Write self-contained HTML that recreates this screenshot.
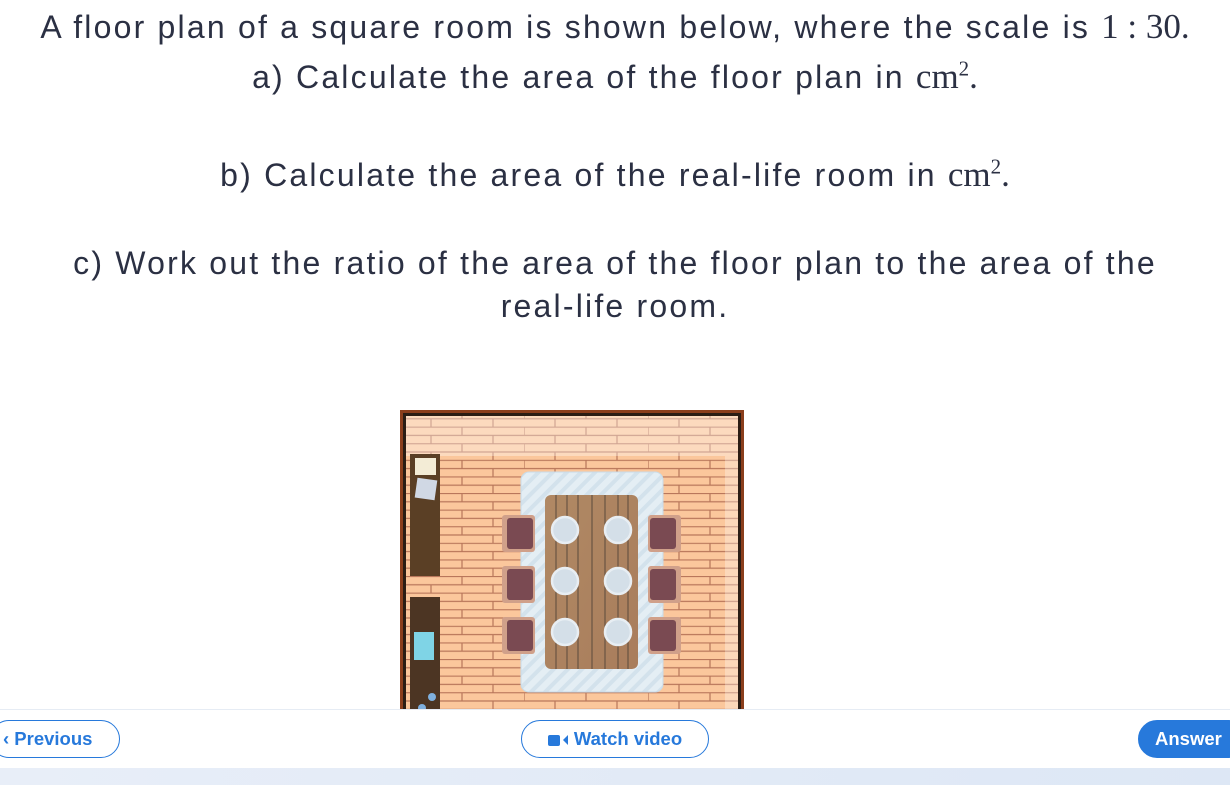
<!DOCTYPE html>
<html><head><meta charset="utf-8"><style>
html,body{margin:0;padding:0;width:1230px;height:785px;overflow:hidden;background:#fff;font-family:"Liberation Sans",sans-serif;color:#2b3043}
.t{position:absolute;left:0;width:1230px;text-align:center;font-size:32px;letter-spacing:2.2px;white-space:nowrap}
.m{font-family:"Liberation Serif",serif;font-size:35px;letter-spacing:0}
sup{font-size:21px;line-height:0}
.btn{position:absolute;top:720px;height:38px;border:1.5px solid #2779db;border-radius:20px;box-sizing:border-box;color:#2779db;font-weight:bold;font-size:18.5px;line-height:36px}
</style></head><body>
<div class="t" style="top:7px">A floor plan of a square room is shown below, where the scale is <span class="m">1 : 30.</span></div>
<div class="t" style="top:57px">a) Calculate the area of the floor plan in <span class="m">cm<sup>2</sup>.</span></div>
<div class="t" style="top:155px">b) Calculate the area of the real-life room in <span class="m">cm<sup>2</sup>.</span></div>
<div class="t" style="top:245px">c) Work out the ratio of the area of the floor plan to the area of the</div>
<div class="t" style="top:288px">real-life room.</div>

<svg style="position:absolute;left:400px;top:410px" width="344" height="300" viewBox="0 0 344 300">
<defs>
<pattern id="b" width="124" height="16.6" patternUnits="userSpaceOnUse">
<rect width="124" height="16.6" fill="#fbc79c"/>
<path d="M0 .5H124M0 8.8H124M0 0V8.3M62 0V8.3M31 8.3V16.6M93 8.3V16.6" stroke="#b8765a" stroke-width="1.2"/>
</pattern>
<pattern id="g" width="10" height="10" patternUnits="userSpaceOnUse" patternTransform="rotate(45)">
<rect width="10" height="10" fill="#e4eef4"/><rect width="4" height="10" fill="#d3e2ec"/>
</pattern>
<linearGradient id="w" x1="0" y1="0" x2="1" y2="1"><stop offset="0" stop-color="#b08964"/><stop offset="1" stop-color="#a97d5c"/></linearGradient>
</defs>
<rect width="344" height="300" fill="#8a3e1c"/>
<rect x="3" y="3" width="338" height="297" fill="#2b1d14"/>
<rect x="6" y="6" width="332" height="294" fill="url(#b)"/>
<rect x="6" y="6" width="332" height="40" fill="#fff" opacity=".35"/>
<rect x="325" y="46" width="13" height="254" fill="#fff" opacity=".3"/>
<rect x="10" y="44" width="30" height="122" fill="#5a3f25"/>
<rect x="10" y="187" width="30" height="113" fill="#4c3523"/>
<rect x="15" y="48" width="21" height="17" fill="#f3ecd6"/>
<rect x="16" y="69" width="20" height="20" fill="#d0d8e4" transform="rotate(8 26 79)"/>
<rect x="14" y="222" width="20" height="28" fill="#7fd4e6"/>
<circle cx="32" cy="287" r="4" fill="#7fb0de"/><circle cx="22" cy="298" r="4" fill="#7fb0de"/>
<rect x="121" y="62" width="142" height="220" rx="8" fill="url(#g)" stroke="#c9dbe7"/>
<g fill="#d0a08a"><rect x="102" y="105" width="33" height="37" rx="3"/><rect x="102" y="156" width="33" height="37" rx="3"/><rect x="102" y="207" width="33" height="37" rx="3"/>
<rect x="248" y="105" width="33" height="37" rx="3"/><rect x="248" y="156" width="33" height="37" rx="3"/><rect x="248" y="207" width="33" height="37" rx="3"/></g>
<g fill="#7a4a52"><rect x="107" y="108" width="26" height="31" rx="3"/><rect x="107" y="159" width="26" height="31" rx="3"/><rect x="107" y="210" width="26" height="31" rx="3"/>
<rect x="250" y="108" width="26" height="31" rx="3"/><rect x="250" y="159" width="26" height="31" rx="3"/><rect x="250" y="210" width="26" height="31" rx="3"/></g>
<rect x="145" y="85" width="93" height="174" rx="6" fill="url(#w)"/>
<path d="M156 85V259M167 85V259M178 85V259M192 85V259M205 85V259M218 85V259M228 85V259" stroke="#5b4a3c" stroke-width="1"/>
<g fill="#d4dfe8" stroke="#e8eef3" stroke-width="2.5"><circle cx="165" cy="120" r="13"/><circle cx="218" cy="120" r="13"/><circle cx="165" cy="171" r="13"/><circle cx="218" cy="171" r="13"/><circle cx="165" cy="222" r="13"/><circle cx="218" cy="222" r="13"/></g>
</svg>

<div style="position:absolute;left:0;top:709px;width:1230px;height:1px;background:#e6ecf4"></div>
<div style="position:absolute;left:0;top:768px;width:1230px;height:17px;background:linear-gradient(90deg,#e8eef8,#dde7f5)"></div>
<div class="btn" style="left:-10px;width:130px;padding-left:12px">&lsaquo; Previous</div>
<div class="btn" style="left:521px;width:188px;text-align:center"><span style="display:inline-block;width:12px;height:11px;background:#2779db;border-radius:2px;margin-right:3px;vertical-align:-1px"></span><span style="display:inline-block;width:0;height:0;border-top:5px solid transparent;border-bottom:5px solid transparent;border-right:5px solid #2779db;margin-right:6px;vertical-align:0"></span>Watch video</div>
<div class="btn" style="left:1138px;width:110px;background:#2779db;color:#fff;padding-left:16px">Answer</div>
</body></html>
